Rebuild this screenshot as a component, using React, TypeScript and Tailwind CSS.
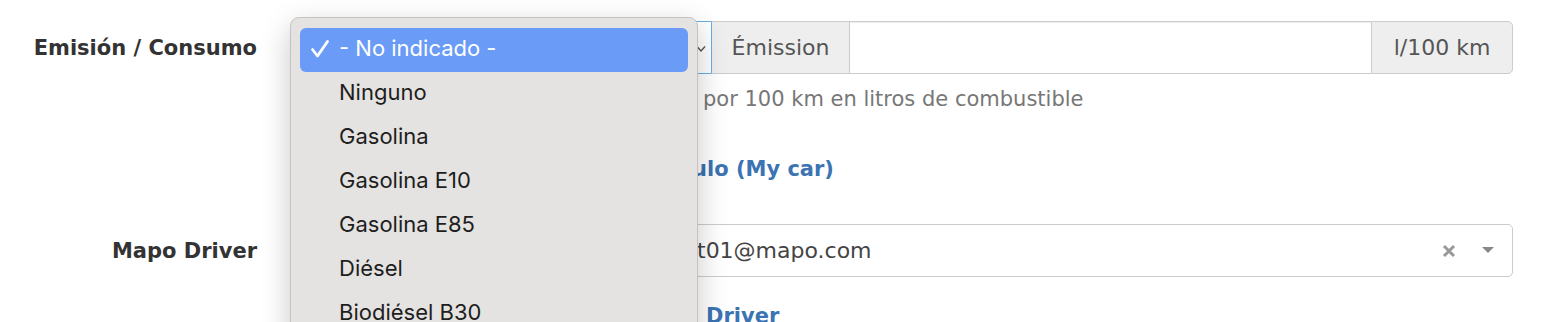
import React from "react";

const menuItems = [
  "Ninguno",
  "Gasolina",
  "Gasolina E10",
  "Gasolina E85",
  "Diésel",
  "Biodiésel B30",
  "Biodiésel B100",
  "Gas natural",
];

function Check() {
  return (
    <svg width="20" height="20" viewBox="0 0 20 20" className="shrink-0">
      <path
        d="M2.5 10.5 L7.5 17 L17.5 2.5"
        fill="none"
        stroke="white"
        strokeWidth="2.8"
        strokeLinecap="round"
        strokeLinejoin="round"
      />
    </svg>
  );
}

export default function App() {
  return (
    <div className="relative w-[1558px] h-[322px] overflow-hidden bg-white font-['DejaVu_Sans',Verdana,sans-serif]">
      {/* Form */}
      <div className="flex flex-col pt-[21px]">
        {/* Row 1 */}
        <div className="flex items-center">
          <div className="w-[257px] text-right text-[21px] font-bold text-[#333] pt-[2px]">
            Emisión / Consumo
          </div>
          <div className="ml-[35px] w-[1221px] flex h-[53px] text-[22px] text-[#555]">
            <div className="relative w-[420px] border border-[#66afe9] rounded-l-[5px] bg-white flex items-center pl-[12px]">
              <span>- No indicado -</span>
              <svg
                width="10"
                height="8"
                viewBox="0 0 10 8"
                className="absolute right-[5px] top-[23px]"
              >
                <path d="M1 1.5 L5 6 L9 1.5" fill="none" stroke="#555" strokeWidth="1.4" />
              </svg>
            </div>
            <div className="w-[138px] border-y border-r border-[#ccc] bg-[#eeeeee] flex items-center justify-center">
              Émission
            </div>
            <div className="w-[521px] border-y border-[#ccc] bg-white shadow-[inset_0_1px_1px_rgba(0,0,0,0.075)]" />
            <div className="w-[142px] border border-[#ccc] bg-[#eeeeee] rounded-r-[5px] flex items-center justify-center">
              l/100 km
            </div>
          </div>
        </div>

        {/* Help */}
        <div className="ml-[292px] mt-[11px] leading-[28px] text-[21px] text-[#777] whitespace-nowrap">
          <span className="inline-block w-[411px] overflow-hidden align-top">Emisión de CO₂ en g/km o consumo </span>
          por 100 km en litros de combustible
        </div>

        {/* Link 1 */}
        <div className="ml-[292px] mt-[42px] leading-[28px] text-[21px] font-bold text-[#3b73b3] whitespace-nowrap">
          <span className="inline-block w-[400px] overflow-hidden align-top">Editar datos del vehíc</span>
          ulo (My car)
        </div>

        {/* Row 2 */}
        <div className="flex items-center mt-[41px]">
          <div className="w-[257px] text-right text-[21px] font-bold text-[#333] pt-[2px]">
            Mapo Driver
          </div>
          <div className="ml-[35px] w-[1221px] h-[53px] border border-[#ccc] rounded-[5px] bg-white flex items-center pl-[12px] pr-[18px] text-[22px] text-[#444]">
            <div className="flex-1 whitespace-nowrap">
              <span className="inline-block w-[392px] overflow-hidden align-top">conductor.driver.tes</span>
              t01@mapo.com
            </div>
            <svg width="14" height="14" viewBox="0 0 14 14" className="mr-[26px]">
              <path d="M2 2 L12 12 M12 2 L2 12" stroke="#999" strokeWidth="3" />
            </svg>
            <svg width="12" height="7" viewBox="0 0 12 7">
              <path d="M0 0 H12 L6 6 Z" fill="#888" />
            </svg>
          </div>
        </div>

        {/* Link 2 */}
        <div className="ml-[292px] mt-[25px] leading-[28px] text-[21px] font-bold text-[#3b73b3] whitespace-nowrap">
          <span className="inline-block w-[414px] overflow-hidden align-top">Gestionar usuarios Mapo </span>
          Driver
        </div>
      </div>

      {/* Native dropdown overlay */}
      <div className="absolute left-[290px] top-[17px] w-[408px] h-[420px] rounded-[9px] border border-[#c4c3c1] bg-[#e4e3e1] shadow-[0_10px_30px_rgba(0,0,0,0.22)] pt-[10px] px-[9px] font-['Inter',sans-serif] text-[22px] text-[#1e1e1e]">
        <div className="h-[44px] rounded-[6px] bg-[#699bf7] flex items-center pl-[10px] pb-[3px] text-white">
          <Check />
          <span className="ml-[9px]">- No indicado -</span>
        </div>
        {menuItems.map((it) => (
          <div key={it} className="h-[44px] flex items-center pl-[39px] pb-[4px]">
            {it}
          </div>
        ))}
      </div>
    </div>
  );
}
